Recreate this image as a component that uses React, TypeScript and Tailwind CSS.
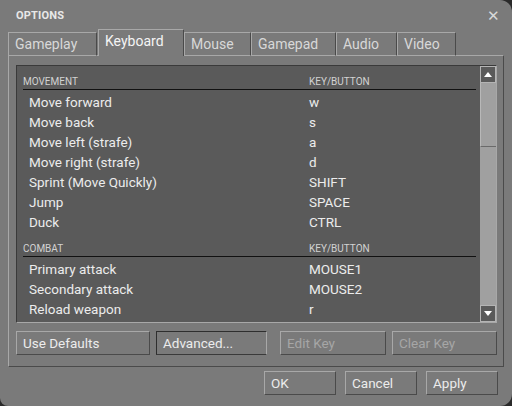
import React from "react";

const movement: [string, string][] = [
  ["Move forward", "w"],
  ["Move back", "s"],
  ["Move left (strafe)", "a"],
  ["Move right (strafe)", "d"],
  ["Sprint (Move Quickly)", "SHIFT"],
  ["Jump", "SPACE"],
  ["Duck", "CTRL"],
];
const combat: [string, string][] = [
  ["Primary attack", "MOUSE1"],
  ["Secondary attack", "MOUSE2"],
  ["Reload weapon", "r"],
  ["Use weapon special", "e"],
];

const tabs = ["Gameplay", "Keyboard", "Mouse", "Gamepad", "Audio", "Video"];
const tabW = [89, 86, 67, 85, 61, 59];

function Header({ title, first }: { title: string; first?: boolean }) {
  return (
    <div className={`flex ml-[6px] mr-[4px] mb-[2px] border-b border-[#111] text-[10px] leading-[14px] text-[#d2d2d2] ${first ? "pt-[9px]" : "pt-[10px]"}`}>
      <div className="w-[286px]">{title}</div>
      <div>KEY/BUTTON</div>
    </div>
  );
}

function Row({ a, b }: { a: string; b: string }) {
  return (
    <div className="flex h-[20px] items-center text-[13.5px] text-[#ececec]">
      <div className="pl-[12px] w-[292px]">{a}</div>
      <div>{b}</div>
    </div>
  );
}

function Btn({ label, w, disabled, pressed }: { label: string; w: number; disabled?: boolean; pressed?: boolean }) {
  const border = pressed
    ? "border-t-[#2e2e2e] border-l-[#2e2e2e] border-r-[#a8a8a8] border-b-[#3a3a3a]"
    : "border-t-[#a8a8a8] border-l-[#a8a8a8] border-r-[#4a4a4a] border-b-[#4a4a4a]";
  return (
    <div
      style={{ width: w }}
      className={`h-[24px] flex items-center px-[6px] text-[13.5px] border ${border} ${disabled ? "text-[#a6a6a6]" : "text-[#ececec]"}`}
    >
      {label}
    </div>
  );
}

export default function App() {
  return (
    <div className="w-[512px] h-[406px] bg-[#2a2a2a]" style={{ fontFamily: "Roboto, 'Liberation Sans', sans-serif" }}>
      <div className="w-[512px] h-[406px] bg-[#7a7a7a] rounded-tr-[12px] rounded-br-[12px] rounded-bl-[8px] flex flex-col">
        {/* title */}
        <div className="h-[30px] flex items-center justify-between pl-[16px] pr-[12px] pt-[3px]">
          <div className="text-[11px] font-bold text-[#e8e8e8] tracking-[0.2px]">OPTIONS</div>
          <div className="text-[15px] text-[#d8d8d8] leading-none">✕</div>
        </div>
        {/* tabs */}
        <div className="flex items-end pl-[8px] h-[26px] relative z-10 -mb-[1px]">
          {tabs.map((t, i) => {
            const active = i === 1;
            return (
              <div
                key={t}
                style={{ width: tabW[i] }}
                className={`flex items-center pl-[6px] border-t border-l border-r border-t-[#a8a8a8] border-l-[#a8a8a8] border-r-[#4a4a4a] bg-[#7a7a7a] ${
                  active ? "h-[27px] text-[#f4f4f4] pb-[3px] ml-[1px]" : "h-[24px] text-[#d8d8d8] border-b border-b-[#a8a8a8]"
                } text-[14px]`}
              >
                {t}
              </div>
            );
          })}
        </div>
        {/* panel */}
        <div className="ml-[8px] w-[496px] h-[312px] border border-t-[#a8a8a8] border-l-[#a8a8a8] border-r-[#4a4a4a] border-b-[#4a4a4a] pt-[9px] pl-[7px] pr-[6px] flex flex-col">
          <div className="h-[258px] border border-t-[#3a3a3a] border-l-[#3a3a3a] border-r-[#a8a8a8] border-b-[#a8a8a8] bg-[#5a5a5a] flex">
            <div className="flex-1 overflow-hidden">
              <Header title="MOVEMENT" first />
              {movement.map(([a, b]) => (
                <Row key={a} a={a} b={b} />
              ))}
              <Header title="COMBAT" />
              {combat.map(([a, b]) => (
                <Row key={a} a={a} b={b} />
              ))}
            </div>
            <div className="w-[16px] bg-[#a0a0a0] flex flex-col">
              <div className="h-[17px] bg-[#5a5a5a] border border-[#b4b4b4] flex items-center justify-center">
                <div className="w-0 h-0 border-l-[4px] border-r-[4px] border-b-[5px] border-l-transparent border-r-transparent border-b-white" />
              </div>
              <div className="h-[64px] bg-[#a0a0a0] border-l border-b border-l-[#b8b8b8] border-b-[#6a6a6a]" />
              <div className="flex-1" />
              <div className="h-[17px] bg-[#5a5a5a] border border-[#b4b4b4] flex items-center justify-center">
                <div className="w-0 h-0 border-l-[4px] border-r-[4px] border-t-[5px] border-l-transparent border-r-transparent border-t-white" />
              </div>
            </div>
          </div>
          <div className="flex mt-[8px]">
            <Btn label="Use Defaults" w={134} />
            <div className="w-[6px]" />
            <Btn label="Advanced..." w={111} pressed />
            <div className="w-[13px]" />
            <Btn label="Edit Key" w={106} disabled />
            <div className="w-[6px]" />
            <Btn label="Clear Key" w={105} disabled />
          </div>
        </div>
        {/* bottom */}
        <div className="flex pl-[264px] mt-[4px] gap-[9px]">
          <Btn label="OK" w={72} />
          <Btn label="Cancel" w={72} />
          <Btn label="Apply" w={72} />
        </div>
      </div>
    </div>
  );
}
